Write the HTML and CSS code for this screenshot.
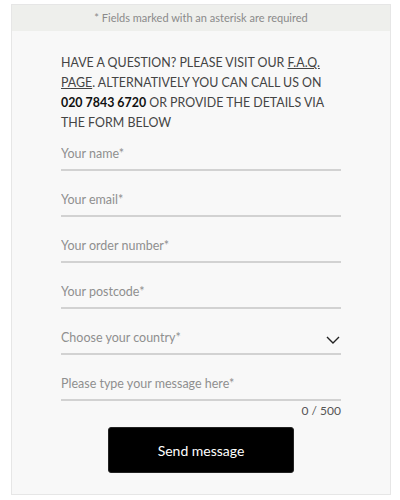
FILE: index.html
```html
<!DOCTYPE HTML>
<html>
  <head>
    <link rel="stylesheet" href="styles.css">
  </head>
  <body>
    <div class="card">
      <div class="required_note">* Fields marked with an asterisk are required</div>
      <div class="content">
        <p class="intro">
          HAVE A QUESTION? PLEASE VISIT OUR <a href="#">F.A.Q. PAGE</a>. ALTERNATIVELY YOU CAN CALL US ON
          <b>020 7843 6720</b> OR PROVIDE THE DETAILS VIA THE FORM BELOW
        </p>
        <form class="contact_form">
          <div class="field"><input placeholder="Your name*"></div>
          <div class="field"><input placeholder="Your email*"></div>
          <div class="field"><input placeholder="Your order number*"></div>
          <div class="field"><input placeholder="Your postcode*"></div>
          <div class="field select_field">
            <span class="select_label">Choose your country*</span>
            <svg class="chevron" width="14" height="8" viewBox="0 0 14 8">
              <path d="M1 1 L7 7 L13 1" fill="none" stroke="#222" stroke-width="1.4"/>
            </svg>
          </div>
          <div class="field message_field"><input placeholder="Please type your message here*"></div>
          <div class="counter">0 / 500</div>
          <div class="actions">
            <button type="button" class="button">Send message</button>
          </div>
        </form>
      </div>
    </div>
  </body>
</html>
```

FILE: styles.css
```css
* {
  box-sizing: border-box;
}

body {
  margin: 0;
  padding: 4px 9px 0 11px;
  background-color: #fff;
  font-family: Lato, "Open Sans", sans-serif;
}

.card {
  border: 1px solid #e6e6e6;
  background-color: #f8f8f8;
  height: 491px;
}

.required_note {
  background-color: #eeefec;
  color: #8a8a8a;
  font-size: 11px;
  text-align: center;
  height: 26px;
  line-height: 26px;
}

.content {
  padding: 22px 49px 0 49px;
}

.intro {
  margin: 0;
  color: #444;
  font-size: 12.4px;
  line-height: 20px;
}

.intro a {
  color: #444;
  text-decoration: underline;
}

.intro b {
  color: #111;
}

.contact_form {
  margin-top: 5px;
}

.field {
  display: flex;
  align-items: center;
  height: 33px;
  border-bottom: 2px solid #d2d2d2;
  margin-bottom: 13px;
}

.field input {
  border: none;
  background: transparent;
  outline: none;
  width: 100%;
  padding: 0;
  font-family: Lato, "Open Sans", sans-serif;
  font-size: 12.5px;
  color: #333;
}

.field input::placeholder {
  color: #8f8f8f;
}

.select_field {
  justify-content: space-between;
}

.select_label {
  color: #8f8f8f;
  font-size: 12.5px;
}

.chevron {
  margin-right: 1px;
  margin-top: 4px;
}

.message_field {
  margin-bottom: 0;
}

.counter {
  text-align: right;
  color: #555;
  font-size: 12px;
  margin-top: 2px;
}

.actions {
  text-align: center;
  margin-top: 9px;
}

.button {
  width: 186px;
  height: 46px;
  background-color: #000;
  color: #fff;
  border: 1px solid #222;
  border-radius: 3px;
  font-family: Lato, "Open Sans", sans-serif;
  font-size: 14px;
}
```
